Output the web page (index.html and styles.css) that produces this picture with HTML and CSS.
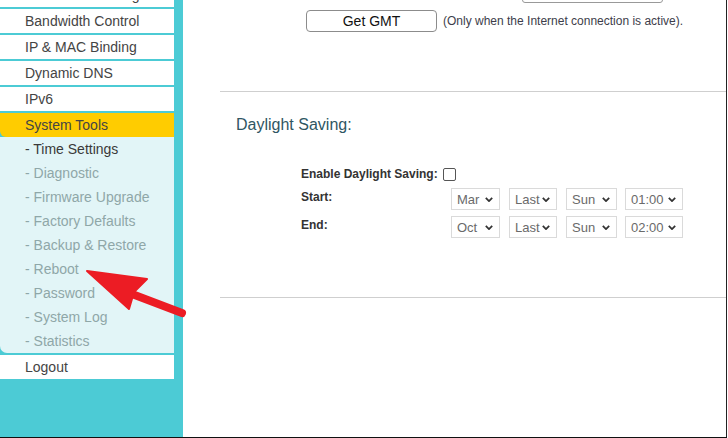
FILE: index.html
```html
<!DOCTYPE html>
<html>
<head>
  <title>System Tools - Time Settings</title>
  <link rel="stylesheet" href="styles.css">
</head>
<body>
  <div class="page">
    <div class="sidebar">
      <ul class="menu">
        <li class="item cut">Advanced Routing</li>
        <li class="item">Bandwidth Control</li>
        <li class="item">IP &amp; MAC Binding</li>
        <li class="item">Dynamic DNS</li>
        <li class="item">IPv6</li>
        <li class="item active">System Tools</li>
        <li class="submenu">
          <div class="sub current">- Time Settings</div>
          <div class="sub">- Diagnostic</div>
          <div class="sub">- Firmware Upgrade</div>
          <div class="sub">- Factory Defaults</div>
          <div class="sub">- Backup &amp; Restore</div>
          <div class="sub">- Reboot</div>
          <div class="sub">- Password</div>
          <div class="sub">- System Log</div>
          <div class="sub">- Statistics</div>
        </li>
        <li class="item">Logout</li>
      </ul>
    </div>

    <div class="main">
      <div class="top-box"></div>
      <div class="gmt-row">
        <button class="btn">Get GMT</button>
        <span class="note">(Only when the Internet connection is active).</span>
      </div>

      <hr class="rule rule-top">

      <h2 class="title">Daylight Saving:</h2>

      <div class="dst">
        <div class="enable">
          <label>Enable Daylight Saving:</label>
          <span class="check"></span>
        </div>
        <div class="dst-row">
          <label>Start:</label>
          <div class="selects">
            <div class="sel w-mon">Mar<svg viewBox="0 0 10 6"><path d="M1 1l4 4 4-4"/></svg></div>
            <div class="sel w-wk">Last<svg viewBox="0 0 10 6"><path d="M1 1l4 4 4-4"/></svg></div>
            <div class="sel w-day">Sun<svg viewBox="0 0 10 6"><path d="M1 1l4 4 4-4"/></svg></div>
            <div class="sel w-time">01:00<svg viewBox="0 0 10 6"><path d="M1 1l4 4 4-4"/></svg></div>
          </div>
        </div>
        <div class="dst-row">
          <label>End:</label>
          <div class="selects">
            <div class="sel w-mon">Oct<svg viewBox="0 0 10 6"><path d="M1 1l4 4 4-4"/></svg></div>
            <div class="sel w-wk">Last<svg viewBox="0 0 10 6"><path d="M1 1l4 4 4-4"/></svg></div>
            <div class="sel w-day">Sun<svg viewBox="0 0 10 6"><path d="M1 1l4 4 4-4"/></svg></div>
            <div class="sel w-time">02:00<svg viewBox="0 0 10 6"><path d="M1 1l4 4 4-4"/></svg></div>
          </div>
        </div>
      </div>

      <hr class="rule rule-bottom">
    </div>

    <!-- annotation arrow pointing at Reboot -->
    <svg class="arrow" viewBox="0 0 728 438" width="728" height="438">
      <line x1="182" y1="313" x2="132" y2="294" stroke="#ec1c24" stroke-width="8" stroke-linecap="round"/>
      <polygon points="87,271 147,279 134,292 129,309" fill="#ec1c24" stroke="#ec1c24" stroke-width="2" stroke-linejoin="round"/>
    </svg>
  </div>
</body>
</html>
```

FILE: styles.css
```css
body {
  margin: 0;
  font-family: "Liberation Sans", Arial, sans-serif;
  background: #fff;
}

.page {
  position: relative;
  display: flex;
  width: 727px;
  height: 438px;
  border-bottom: 1px solid #111;
  box-sizing: border-box;
  overflow: hidden;
}

/* left menu */
.sidebar {
  width: 183px;
  flex-shrink: 0;
  background: #4ccbd5;
}

.menu {
  list-style: none;
  margin: -17px 0 0 0;
  padding: 0;
  width: 174px;
}

.item {
  height: 24px;
  line-height: 24px;
  padding-left: 25px;
  margin-bottom: 2px;
  background: #fff;
  color: #444;
  font-size: 14px;
}

.item.active {
  background: #ffcc00;
  margin-bottom: 0;
  border-bottom-left-radius: 6px;
}

.submenu {
  background: #e2f5f7;
  border-bottom-left-radius: 7px;
  margin-bottom: 2px;
}

.sub {
  height: 24px;
  line-height: 24px;
  padding-left: 25px;
  font-size: 14px;
  color: #8fa7a8;
}

.sub.current {
  color: #3a3a3a;
}

/* content */
.main {
  flex: 1;
  border-right: 1px solid #222;
  position: relative;
}

.top-box {
  width: 139px;
  height: 20px;
  margin: -19px 0 0 339px;
  border: 1px solid #999;
  border-radius: 3px;
}

.gmt-row {
  display: flex;
  align-items: center;
  margin: 7px 0 0 123px;
}

.btn {
  width: 131px;
  height: 22px;
  padding: 0;
  border: 1px solid #8c8c8c;
  border-radius: 4px;
  background: #fff;
  font-family: inherit;
  font-size: 14px;
  color: #111;
}

.note {
  margin-left: 6px;
  font-size: 12px;
  color: #3d3d4a;
}

.rule {
  border: 0;
  border-top: 1px solid #cfcfcf;
  margin: 0 0 0 37px;
}

.rule-top {
  margin-top: 59px;
}

.rule-bottom {
  margin-top: 59px;
}

.title {
  margin: 23px 0 0 53px;
  font-size: 16px;
  font-weight: normal;
  line-height: 20px;
  color: #2f5663;
}

.dst {
  margin: 32px 0 0 118px;
}

.dst label {
  font-size: 12px;
  font-weight: bold;
  color: #333;
}

.enable {
  display: flex;
  align-items: center;
  height: 14px;
}

.check {
  width: 11px;
  height: 11px;
  margin-left: 5px;
  border: 1px solid #555;
  border-radius: 2px;
}

.dst-row {
  display: flex;
  margin-top: 7px;
}

.dst-row + .dst-row {
  margin-top: 6px;
}

.dst-row label {
  width: 150px;
  line-height: 18px;
}

.selects {
  display: flex;
  gap: 9px;
}

.sel {
  display: flex;
  align-items: center;
  justify-content: space-between;
  height: 22px;
  box-sizing: border-box;
  padding: 0 6px 0 5px;
  border: 1px solid #dadada;
  font-size: 13px;
  color: #6a6a6a;
}

.sel svg {
  width: 8px;
  height: 5px;
  fill: none;
  stroke: #333;
  stroke-width: 2.2;
}

.w-mon { width: 49px; }
.w-wk { width: 48px; }
.w-day { width: 51px; }
.w-time { width: 58px; margin-left: -1px; }

.arrow {
  position: absolute;
  left: 0;
  top: 0;
  pointer-events: none;
}
```
